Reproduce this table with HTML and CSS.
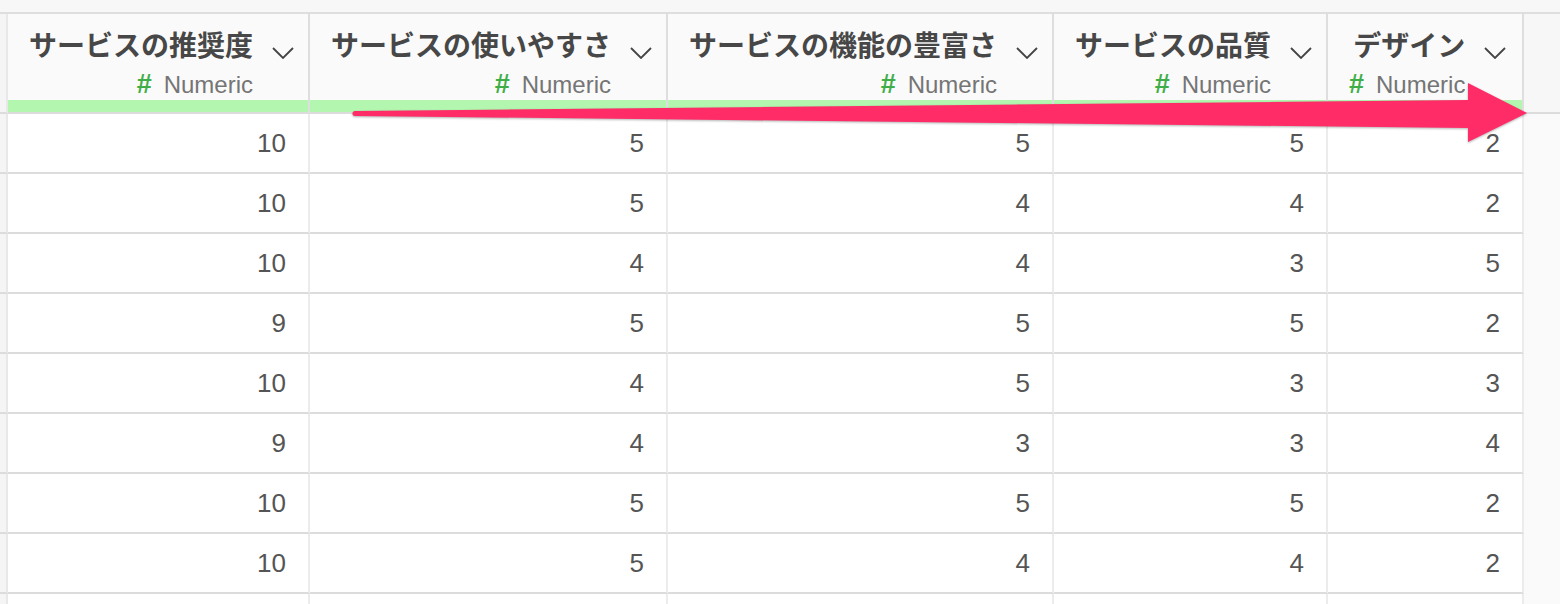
FILE: index.html
```html
<!DOCTYPE html>
<html lang="ja">
<head>
<meta charset="utf-8">
<title>Numeric columns</title>
<link rel="stylesheet" href="styles.css">
</head>
<body>
<div class="sheet">
  <div class="stub head"></div>
  <div class="hcell"><div class="hbody"><div class="hblock"><div class="title">サービスの推奨度</div><div class="type"><span class="hash">#</span>Numeric</div></div><svg class="chev" viewBox="0 0 22 12"><polyline points="1,1 11,11 21,1"/></svg></div><div class="bar"></div></div>
  <div class="hcell"><div class="hbody"><div class="hblock"><div class="title">サービスの使いやすさ</div><div class="type"><span class="hash">#</span>Numeric</div></div><svg class="chev" viewBox="0 0 22 12"><polyline points="1,1 11,11 21,1"/></svg></div><div class="bar"></div></div>
  <div class="hcell"><div class="hbody"><div class="hblock"><div class="title">サービスの機能の豊富さ</div><div class="type"><span class="hash">#</span>Numeric</div></div><svg class="chev" viewBox="0 0 22 12"><polyline points="1,1 11,11 21,1"/></svg></div><div class="bar"></div></div>
  <div class="hcell"><div class="hbody"><div class="hblock"><div class="title">サービスの品質</div><div class="type"><span class="hash">#</span>Numeric</div></div><svg class="chev" viewBox="0 0 22 12"><polyline points="1,1 11,11 21,1"/></svg></div><div class="bar"></div></div>
  <div class="hcell"><div class="hbody"><div class="hblock"><div class="title">デザイン</div><div class="type"><span class="hash">#</span>Numeric</div></div><svg class="chev" viewBox="0 0 22 12"><polyline points="1,1 11,11 21,1"/></svg></div><div class="bar"></div></div>
  <div class="hfill"></div>

  <div class="stub"></div><div class="cell">10</div><div class="cell">5</div><div class="cell">5</div><div class="cell">5</div><div class="cell">2</div><div class="fill"></div>
  <div class="stub"></div><div class="cell">10</div><div class="cell">5</div><div class="cell">4</div><div class="cell">4</div><div class="cell">2</div><div class="fill"></div>
  <div class="stub"></div><div class="cell">10</div><div class="cell">4</div><div class="cell">4</div><div class="cell">3</div><div class="cell">5</div><div class="fill"></div>
  <div class="stub"></div><div class="cell">9</div><div class="cell">5</div><div class="cell">5</div><div class="cell">5</div><div class="cell">2</div><div class="fill"></div>
  <div class="stub"></div><div class="cell">10</div><div class="cell">4</div><div class="cell">5</div><div class="cell">3</div><div class="cell">3</div><div class="fill"></div>
  <div class="stub"></div><div class="cell">9</div><div class="cell">4</div><div class="cell">3</div><div class="cell">3</div><div class="cell">4</div><div class="fill"></div>
  <div class="stub"></div><div class="cell">10</div><div class="cell">5</div><div class="cell">5</div><div class="cell">5</div><div class="cell">2</div><div class="fill"></div>
  <div class="stub"></div><div class="cell">10</div><div class="cell">5</div><div class="cell">4</div><div class="cell">4</div><div class="cell">2</div><div class="fill"></div>
  <div class="stub last"></div><div class="cell last"></div><div class="cell last"></div><div class="cell last"></div><div class="cell last"></div><div class="cell last"></div><div class="fill"></div>
</div>
<svg class="arrow" viewBox="0 0 1560 604" width="1560" height="604">
  <polygon points="355,111 1468,100 1468,83 1527,113 1468,142 1468,128 355,116"/>
  <circle cx="355" cy="113.5" r="2.5"/>
</svg>
</body>
</html>
```

FILE: styles.css
```css
html, body {
  margin: 0;
  height: 604px;
  overflow: hidden;
}
body {
  background: #f7f7f7;
  font-family: "Liberation Sans", Arial, sans-serif;
  position: relative;
}
.sheet {
  margin-top: 12px;
  border-top: 2px solid #dedede;
  display: grid;
  grid-template-columns: 8px 302px 358px 386px 274px 196px 1fr;
  grid-template-rows: 100px repeat(8, 60px) 10px;
}
.sheet > div {
  box-sizing: border-box;
}
.stub {
  background: #f5f5f5;
  border-right: 2px solid #e8e8e8;
  border-bottom: 2px solid #dcdcdc;
}
.hcell {
  background: #fafafa;
  border-right: 2px solid #dedede;
  border-bottom: 2px solid #dcdcdc;
  display: flex;
  flex-direction: column;
}
.hbody {
  flex: 1;
  display: flex;
  align-items: flex-start;
  padding: 14px 0 0 21px;
}
.hblock {
  display: flex;
  flex-direction: column;
  align-items: flex-end;
}
.title {
  font-family: "Noto Sans CJK JP", "Noto Sans", sans-serif;
  font-weight: 700;
  font-size: 28px;
  line-height: 32px;
  color: #474747;
  white-space: nowrap;
}
.type {
  font-size: 24px;
  line-height: 24px;
  margin-top: 12px;
  color: #757575;
  white-space: nowrap;
  display: flex;
  align-items: baseline;
}
.hash {
  color: #3fae49;
  font-weight: 700;
  font-size: 27px;
  margin-right: 12px;
}
.chev {
  margin-left: 19px;
  margin-top: 19px;
  width: 22px;
  height: 12px;
  flex: none;
}
.chev polyline {
  fill: none;
  stroke: #444;
  stroke-width: 1.8;
}
.bar {
  height: 12px;
  background: #b3f6b0;
}
.hfill {
  background: #f7f7f7;
  border-bottom: 2px solid #dcdcdc;
}
.cell {
  background: #fff;
  border-right: 2px solid #ececec;
  border-bottom: 2px solid #dcdcdc;
  display: flex;
  align-items: center;
  justify-content: flex-end;
  padding-right: 22px;
  font-size: 26px;
  color: #555;
}
.cell.last, .stub.last {
  border-bottom: none;
}
.fill {
  background: #fafafa;
}
.arrow {
  position: absolute;
  top: 0;
  left: 0;
  pointer-events: none;
  filter: drop-shadow(0 1px 1px rgba(0, 0, 0, 0.3));
}
.arrow polygon, .arrow circle {
  fill: #ff2c68;
}
```
